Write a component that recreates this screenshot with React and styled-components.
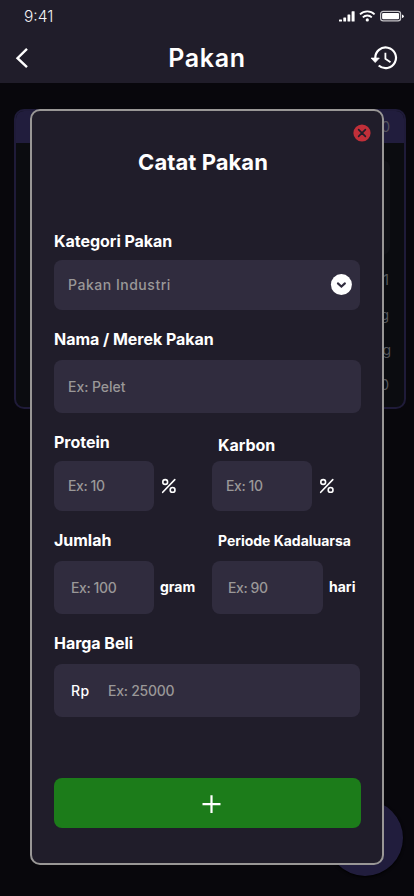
import React from "react";
import styled, { createGlobalStyle } from "styled-components";

const GlobalStyle = createGlobalStyle`
  * { box-sizing: border-box; }
  body { margin: 0; background: #08070c; font-family: Inter, "Liberation Sans", sans-serif; }
`;

const Screen = styled.div`
  position: relative;
  width: 414px;
  height: 896px;
  overflow: hidden;
  background: #08070c;
  color: #fff;
`;

const Header = styled.header`
  height: 83px;
  background: #201d2a;
`;

const StatusBar = styled.div`
  display: flex;
  justify-content: space-between;
  align-items: center;
  height: 32px;
  padding: 0 9px 0 24px;
`;

const Clock = styled.span`
  padding-top: 1px;
  font-size: 15.5px;
  line-height: 20px;
  font-weight: 300;
  color: #f4f4f5;
`;

const NavBar = styled.div`
  display: grid;
  grid-template-columns: 60px 1fr 60px;
  align-items: center;
  height: 51px;
`;

const NavTitle = styled.h1`
  margin: 0;
  text-align: center;
  font-size: 25px;
  line-height: 30px;
  font-weight: 600;
  letter-spacing: 0.7px;
`;

const NavIcon = styled.div`
  display: flex;
  height: 30px;
  align-items: center;
  justify-content: ${(p) => (p.$end ? "flex-end" : "flex-start")};
  padding: ${(p) => (p.$end ? "0 16px 0 0" : "0 0 0 14px")};
`;

const Card = styled.section`
  width: 392px;
  height: 300px;
  margin: 26px 0 0 14px;
  border: 2px solid #1f1b39;
  border-radius: 10px;
  background: #0b0c10;
  overflow: hidden;
`;

const CardHeader = styled.div`
  height: 32px;
  padding: 0 14px;
  background: #211d3d;
  color: #55545f;
  font-size: 14px;
  line-height: 31px;
  text-align: right;
`;

const CardPanel = styled.div`
  height: 95px;
  margin: 17px 14px 15px;
  border-radius: 8px;
  background: #101116;
`;

const CardLine = styled.div`
  height: 35px;
  padding-right: ${(p) => p.$inset}px;
  color: #55565a;
  font-size: 14px;
  line-height: 20px;
  text-align: right;
`;

const FloatingButton = styled.div`
  position: absolute;
  left: 327px;
  top: 800px;
  width: 76px;
  height: 76px;
  border-radius: 50%;
  background: #211d3d;
  box-shadow: 0 1px 3px #000;
`;

const Dialog = styled.div`
  position: absolute;
  left: 30px;
  top: 109px;
  width: 354px;
  height: 756px;
  padding: 37px 21px 0 22px;
  border: 2px solid #999796;
  border-radius: 10px;
  background: #201d2a;
`;

const CloseButton = styled.div`
  position: absolute;
  top: 13px;
  right: 11px;
  width: 18px;
  height: 18px;
  svg { display: block; }
`;

const DialogTitle = styled.h2`
  margin: 0 0 55px;
  padding-right: 9px;
  text-align: center;
  font-size: 22px;
  line-height: 28px;
  font-weight: 700;
  letter-spacing: 0.05px;
`;

const Form = styled.div`
  display: flex;
  flex-direction: column;
  gap: 19px;
`;

const Columns = styled.div`
  display: grid;
  grid-template-columns: 158px 149px;
`;

const Field = styled.div`
  display: flex;
  flex-direction: column;
  gap: ${(p) => (p.$tall ? 11 : 9)}px;
`;

const Label = styled.label`
  height: 20px;
  padding: ${(p) => p.$drop || 0}px 0 0 ${(p) => p.$indent || 0}px;
  font-size: ${(p) => p.$size || 16}px;
  line-height: 20px;
  font-weight: 700;
  letter-spacing: -0.03px;
  white-space: nowrap;
`;

const InputRow = styled.div`
  display: flex;
  align-items: center;
  gap: ${(p) => p.$gap || 0}px;
`;

const InputBox = styled.div`
  display: flex;
  align-items: center;
  width: ${(p) => p.$width || 307}px;
  height: ${(p) => (p.$tall ? 53 : 50)}px;
  padding: 0 8px 0 ${(p) => p.$indent || 14}px;
  border-radius: 8px;
  background: #302c3e;
`;

const Placeholder = styled.span`
  flex: 1;
  font-size: 14px;
  line-height: 20px;
  font-weight: 500;
  letter-spacing: ${(p) => p.$spacing || 0}px;
  color: #9a9898;
  white-space: nowrap;
`;

const Prefix = styled.span`
  width: 37px;
  font-size: 14px;
  line-height: 20px;
  font-weight: 500;
  letter-spacing: 0.4px;
`;

const Unit = styled.span`
  padding-bottom: 2px;
  font-size: 14px;
  line-height: 20px;
  font-weight: 700;
`;

const Submit = styled.div`
  display: flex;
  align-items: center;
  justify-content: center;
  width: 307px;
  height: 50px;
  margin-top: 61px;
  padding-left: 6px;
  border-radius: 8px;
  background: #1c7c1a;
`;

const StatusIcons = () => (
  <svg width="67" height="14" viewBox="0 0 67 14" fill="#fff">
    <rect x="1" y="10.5" width="3" height="2" rx="0.5" />
    <rect x="5.3" y="8.5" width="2.8" height="4" rx="0.5" />
    <rect x="9.5" y="5.5" width="2.8" height="7" rx="0.5" />
    <rect x="13.6" y="2.2" width="3" height="10.3" rx="0.5" />
    <g fill="none" stroke="#fff" strokeWidth="1.8">
      <path d="M22 5.3a10.5 10.5 0 0 1 14.6 0" />
      <path d="M24.8 8.3a6.5 6.5 0 0 1 9 0" />
    </g>
    <circle cx="29.3" cy="10.9" r="1.6" />
    <rect x="42.6" y="2.4" width="20" height="9.5" rx="2.6" fill="none" stroke="#c5c4c8" strokeWidth="1.2" />
    <rect x="44.1" y="4" width="17" height="6.3" rx="1.2" />
    <path d="M64 5.4q1.8.4 1.8 1.8t-1.8 1.8z" />
  </svg>
);

const BackIcon = () => (
  <svg width="16" height="22" viewBox="0 0 16 22" fill="none" stroke="#fff" strokeWidth="2.4">
    <path d="M13 1.9 3.5 11.2l9.5 8.9" />
  </svg>
);

const HistoryIcon = () => (
  <svg width="28" height="26" viewBox="0 0 28 26" fill="none" stroke="#fff">
    <path d="M5.3 13.3A10.35 10.35 0 1 1 8.7 20.5" strokeWidth="2.2" />
    <path d="M1.1 13.1h8.2l-4.1 4.4z" fill="#fff" strokeWidth="0.8" strokeLinejoin="round" />
    <path d="M15.4 7.8v6l5.1 3.5" strokeWidth="1.8" />
  </svg>
);

const CloseIcon = () => (
  <svg width="18" height="18" viewBox="0 0 18 18">
    <circle cx="9" cy="9" r="8.6" fill="#c12f39" />
    <path d="m5.6 5.6 6.8 6.8m0-6.8-6.8 6.8" stroke="#201d2a" strokeWidth="1.6" strokeLinecap="round" />
  </svg>
);

const DropdownIcon = () => (
  <svg width="22" height="22" viewBox="0 0 22 22">
    <circle cx="11.4" cy="10.6" r="10.5" fill="#fff" />
    <path d="m7.9 9.4 3.5 3.1 3.5-3.1" fill="none" stroke="#302c3e" strokeWidth="2.1" strokeLinecap="round" />
  </svg>
);

const PercentIcon = () => (
  <svg width="16" height="16" viewBox="0 0 16 16" fill="none" stroke="#fff" strokeWidth="1.6">
    <circle cx="4.2" cy="4" r="2.4" />
    <circle cx="11.6" cy="11.9" r="2.4" />
    <path d="M13.8 1.6 1.7 14.3" strokeLinecap="round" />
  </svg>
);

const PlusIcon = () => (
  <svg width="20" height="20" viewBox="0 0 20 20" fill="none" stroke="#fff" strokeWidth="2.2">
    <path d="M10.5 2.2v18M1.5 11.2h18" />
  </svg>
);

export default function App() {
  return (
    <>
      <GlobalStyle />
      <Screen>
        <Header>
          <StatusBar>
            <Clock>9:41</Clock>
            <StatusIcons />
          </StatusBar>
          <NavBar>
            <NavIcon><BackIcon /></NavIcon>
            <NavTitle>Pakan</NavTitle>
            <NavIcon $end><HistoryIcon /></NavIcon>
          </NavBar>
        </Header>
        <Card>
          <CardHeader>0</CardHeader>
          <CardPanel />
          <CardLine $inset={15}>1</CardLine>
          <CardLine $inset={15}>g</CardLine>
          <CardLine $inset={13}>g</CardLine>
          <CardLine $inset={15}>0</CardLine>
        </Card>
        <FloatingButton />
        <Dialog>
          <CloseButton><CloseIcon /></CloseButton>
          <DialogTitle>Catat Pakan</DialogTitle>
          <Form>
            <Field>
              <Label>Kategori Pakan</Label>
              <InputBox $width={306}>
                <Placeholder $spacing={0.52}>Pakan Industri</Placeholder>
                <DropdownIcon />
              </InputBox>
            </Field>
            <Field $tall>
              <Label>Nama / Merek Pakan</Label>
              <InputBox $tall>
                <Placeholder $spacing={-0.05}>Ex: Pelet</Placeholder>
              </InputBox>
            </Field>
            <Columns>
              <Field>
                <Label>Protein</Label>
                <InputRow $gap={7}>
                  <InputBox $width={100}><Placeholder $spacing={-0.4}>Ex: 10</Placeholder></InputBox>
                  <PercentIcon />
                </InputRow>
              </Field>
              <Field>
                <Label $indent={6} $drop={3}>Karbon</Label>
                <InputRow $gap={7}>
                  <InputBox $width={100}><Placeholder $spacing={-0.4}>Ex: 10</Placeholder></InputBox>
                  <PercentIcon />
                </InputRow>
              </Field>
            </Columns>
            <Columns>
              <Field $tall>
                <Label>Jumlah</Label>
                <InputRow $gap={6}>
                  <InputBox $tall $width={100} $indent={17}><Placeholder $spacing={-0.4}>Ex: 100</Placeholder></InputBox>
                  <Unit>gram</Unit>
                </InputRow>
              </Field>
              <Field $tall>
                <Label $indent={6} $size={14} $drop={1}>Periode Kadaluarsa</Label>
                <InputRow $gap={6}>
                  <InputBox $tall $width={111} $indent={16}><Placeholder $spacing={-0.4}>Ex: 90</Placeholder></InputBox>
                  <Unit>hari</Unit>
                </InputRow>
              </Field>
            </Columns>
            <Field $tall>
              <Label>Harga Beli</Label>
              <InputBox $tall $width={306} $indent={17}>
                <Prefix>Rp</Prefix>
                <Placeholder $spacing={-0.25}>Ex: 25000</Placeholder>
              </InputBox>
            </Field>
          </Form>
          <Submit><PlusIcon /></Submit>
        </Dialog>
      </Screen>
    </>
  );
}
